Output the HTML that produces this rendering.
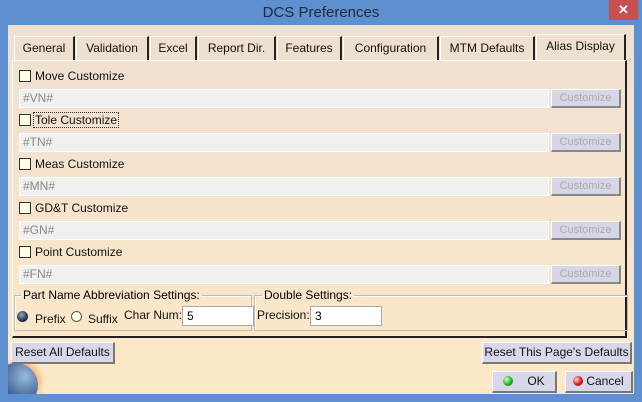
<!DOCTYPE html><html><head><style>
*{box-sizing:border-box;margin:0;padding:0}
html,body{width:642px;height:402px;overflow:hidden}
body{background:#5e8fcf;font-family:"Liberation Sans",sans-serif;font-size:12px;position:relative}
.a{position:absolute}
.title{left:0;top:0;width:642px;height:28px;text-align:center;line-height:26px;font-size:15px;color:#1f2a3a}
.x{left:609px;top:0;width:29px;height:20px;background:#c75050;color:#fff;text-align:center;line-height:19px;font-size:13px;font-weight:bold}
.client{left:8px;top:25px;width:626px;height:369px;background:linear-gradient(#efe0d2,#f6e4cc 50%,#fde9c6);overflow:hidden}
.tab{top:36px;height:24px;border:1px solid #fff;border-right:2px solid #222;border-bottom:none;line-height:22px;text-align:center;color:#111;font-size:12px;background:#efdfcf}
.panel{left:12px;top:60px;width:615px;height:278px;border:1px solid #fff;border-right:2px solid #222;border-bottom:2px solid #222}
.cb{width:12px;height:12px;border:1px solid #333;background:#ffffe6}
.lbl{font-size:12px;color:#111}
.tf{left:19px;width:530px;height:19px;background:#f0f0f0;border:1px solid #fff;color:#888;padding-left:3px;line-height:17px}
.cz{left:551px;width:70px;height:19px;background:#d6d6e6;border:1px solid #fff;border-right:2px solid #888;border-bottom:2px solid #888;color:#aaa;text-align:center;line-height:16px;font-size:11px}
.grp{border:1px solid #bbb;box-shadow:inset 1px 1px #fff}
.gt{background:#f9e5ca;padding:0 2px;font-size:12px}
.btn{height:22px;background:#d8d8ea;border:1px solid #fff;border-right:2px solid #777;border-bottom:2px solid #777;text-align:center;line-height:19px;font-size:12px;color:#111}
.in{background:#fff;border:1px solid #aaa;height:20px;padding-left:4px;line-height:18px}
</style></head><body>
<div class="a title">DCS Preferences</div>
<div class="a x">✕</div>
<div class="a client"><div class="a" style="left:-14px;top:338px;width:44px;height:44px;border-radius:50%;background:radial-gradient(circle at 70% 30%,#9bd,#247 70%);box-shadow:3px -3px 6px #fb7"></div></div>
<div class="a tab" style="left:14px;width:61px">General</div>
<div class="a tab" style="left:76px;width:73px">Validation</div>
<div class="a tab" style="left:150px;width:47px">Excel</div>
<div class="a tab" style="left:198px;width:78px">Report Dir.</div>
<div class="a tab" style="left:277px;width:65px">Features</div>
<div class="a tab" style="left:343px;width:96px">Configuration</div>
<div class="a tab" style="left:440px;width:95px">MTM Defaults</div>
<div class="a tab" style="left:536px;width:90px;top:34px;height:27px;background:#f0e0d0">Alias Display</div>
<div class="a panel"></div>

<div class="a cb" style="left:19px;top:70px"></div><div class="a lbl" style="left:35px;top:69px">Move Customize</div>
<div class="a tf" style="top:89px">#VN#</div><div class="a cz" style="top:89px">Customize</div>
<div class="a cb" style="left:19px;top:114px"></div><div class="a lbl" style="left:33px;top:112px;border:1px dotted #333;padding:0 1px">Tole Customize</div>
<div class="a tf" style="top:133px">#TN#</div><div class="a cz" style="top:133px">Customize</div>
<div class="a cb" style="left:19px;top:158px"></div><div class="a lbl" style="left:35px;top:157px">Meas Customize</div>
<div class="a tf" style="top:177px">#MN#</div><div class="a cz" style="top:177px">Customize</div>
<div class="a cb" style="left:19px;top:202px"></div><div class="a lbl" style="left:35px;top:201px">GD&amp;T Customize</div>
<div class="a tf" style="top:221px">#GN#</div><div class="a cz" style="top:221px">Customize</div>
<div class="a cb" style="left:19px;top:246px"></div><div class="a lbl" style="left:35px;top:245px">Point Customize</div>
<div class="a tf" style="top:265px">#FN#</div><div class="a cz" style="top:265px">Customize</div>

<div class="a grp" style="left:14px;top:295px;width:238px;height:36px"></div>
<div class="a gt" style="left:21px;top:288px">Part Name Abbreviation Settings:</div>
<div class="a" style="left:17px;top:311px;width:11px;height:11px;border-radius:50%;background:radial-gradient(circle at 40% 35%,#8ab 0,#124 70%)"></div>
<div class="a lbl" style="left:35px;top:312px">Prefix</div>
<div class="a" style="left:71px;top:311px;width:11px;height:11px;border-radius:50%;border:1px solid #555;background:#ffffe6"></div>
<div class="a lbl" style="left:88px;top:312px">Suffix</div>
<div class="a lbl" style="left:124px;top:308px">Char Num:</div>
<div class="a in" style="left:182px;top:306px;width:72px">5</div>
<div class="a grp" style="left:254px;top:295px;width:374px;height:36px"></div>
<div class="a gt" style="left:262px;top:288px">Double Settings:</div>
<div class="a lbl" style="left:257px;top:308px">Precision:</div>
<div class="a in" style="left:310px;top:306px;width:72px">3</div>

<div class="a btn" style="left:11px;top:342px;width:104px">Reset All Defaults</div>
<div class="a btn" style="left:482px;top:342px;width:150px">Reset This Page's Defaults</div>
<div class="a btn" style="left:492px;top:371px;width:65px"><span style="display:inline-block;width:10px;height:10px;border-radius:50%;background:radial-gradient(circle at 35% 35%,#cfc,#1a1 60%);vertical-align:-1px;margin-right:14px"></span>OK</div>
<div class="a btn" style="left:565px;top:371px;width:68px"><span style="display:inline-block;width:10px;height:10px;border-radius:50%;background:radial-gradient(circle at 35% 35%,#fcc,#c11 60%);vertical-align:-1px;margin-right:3px"></span>Cancel</div>
</body></html>
